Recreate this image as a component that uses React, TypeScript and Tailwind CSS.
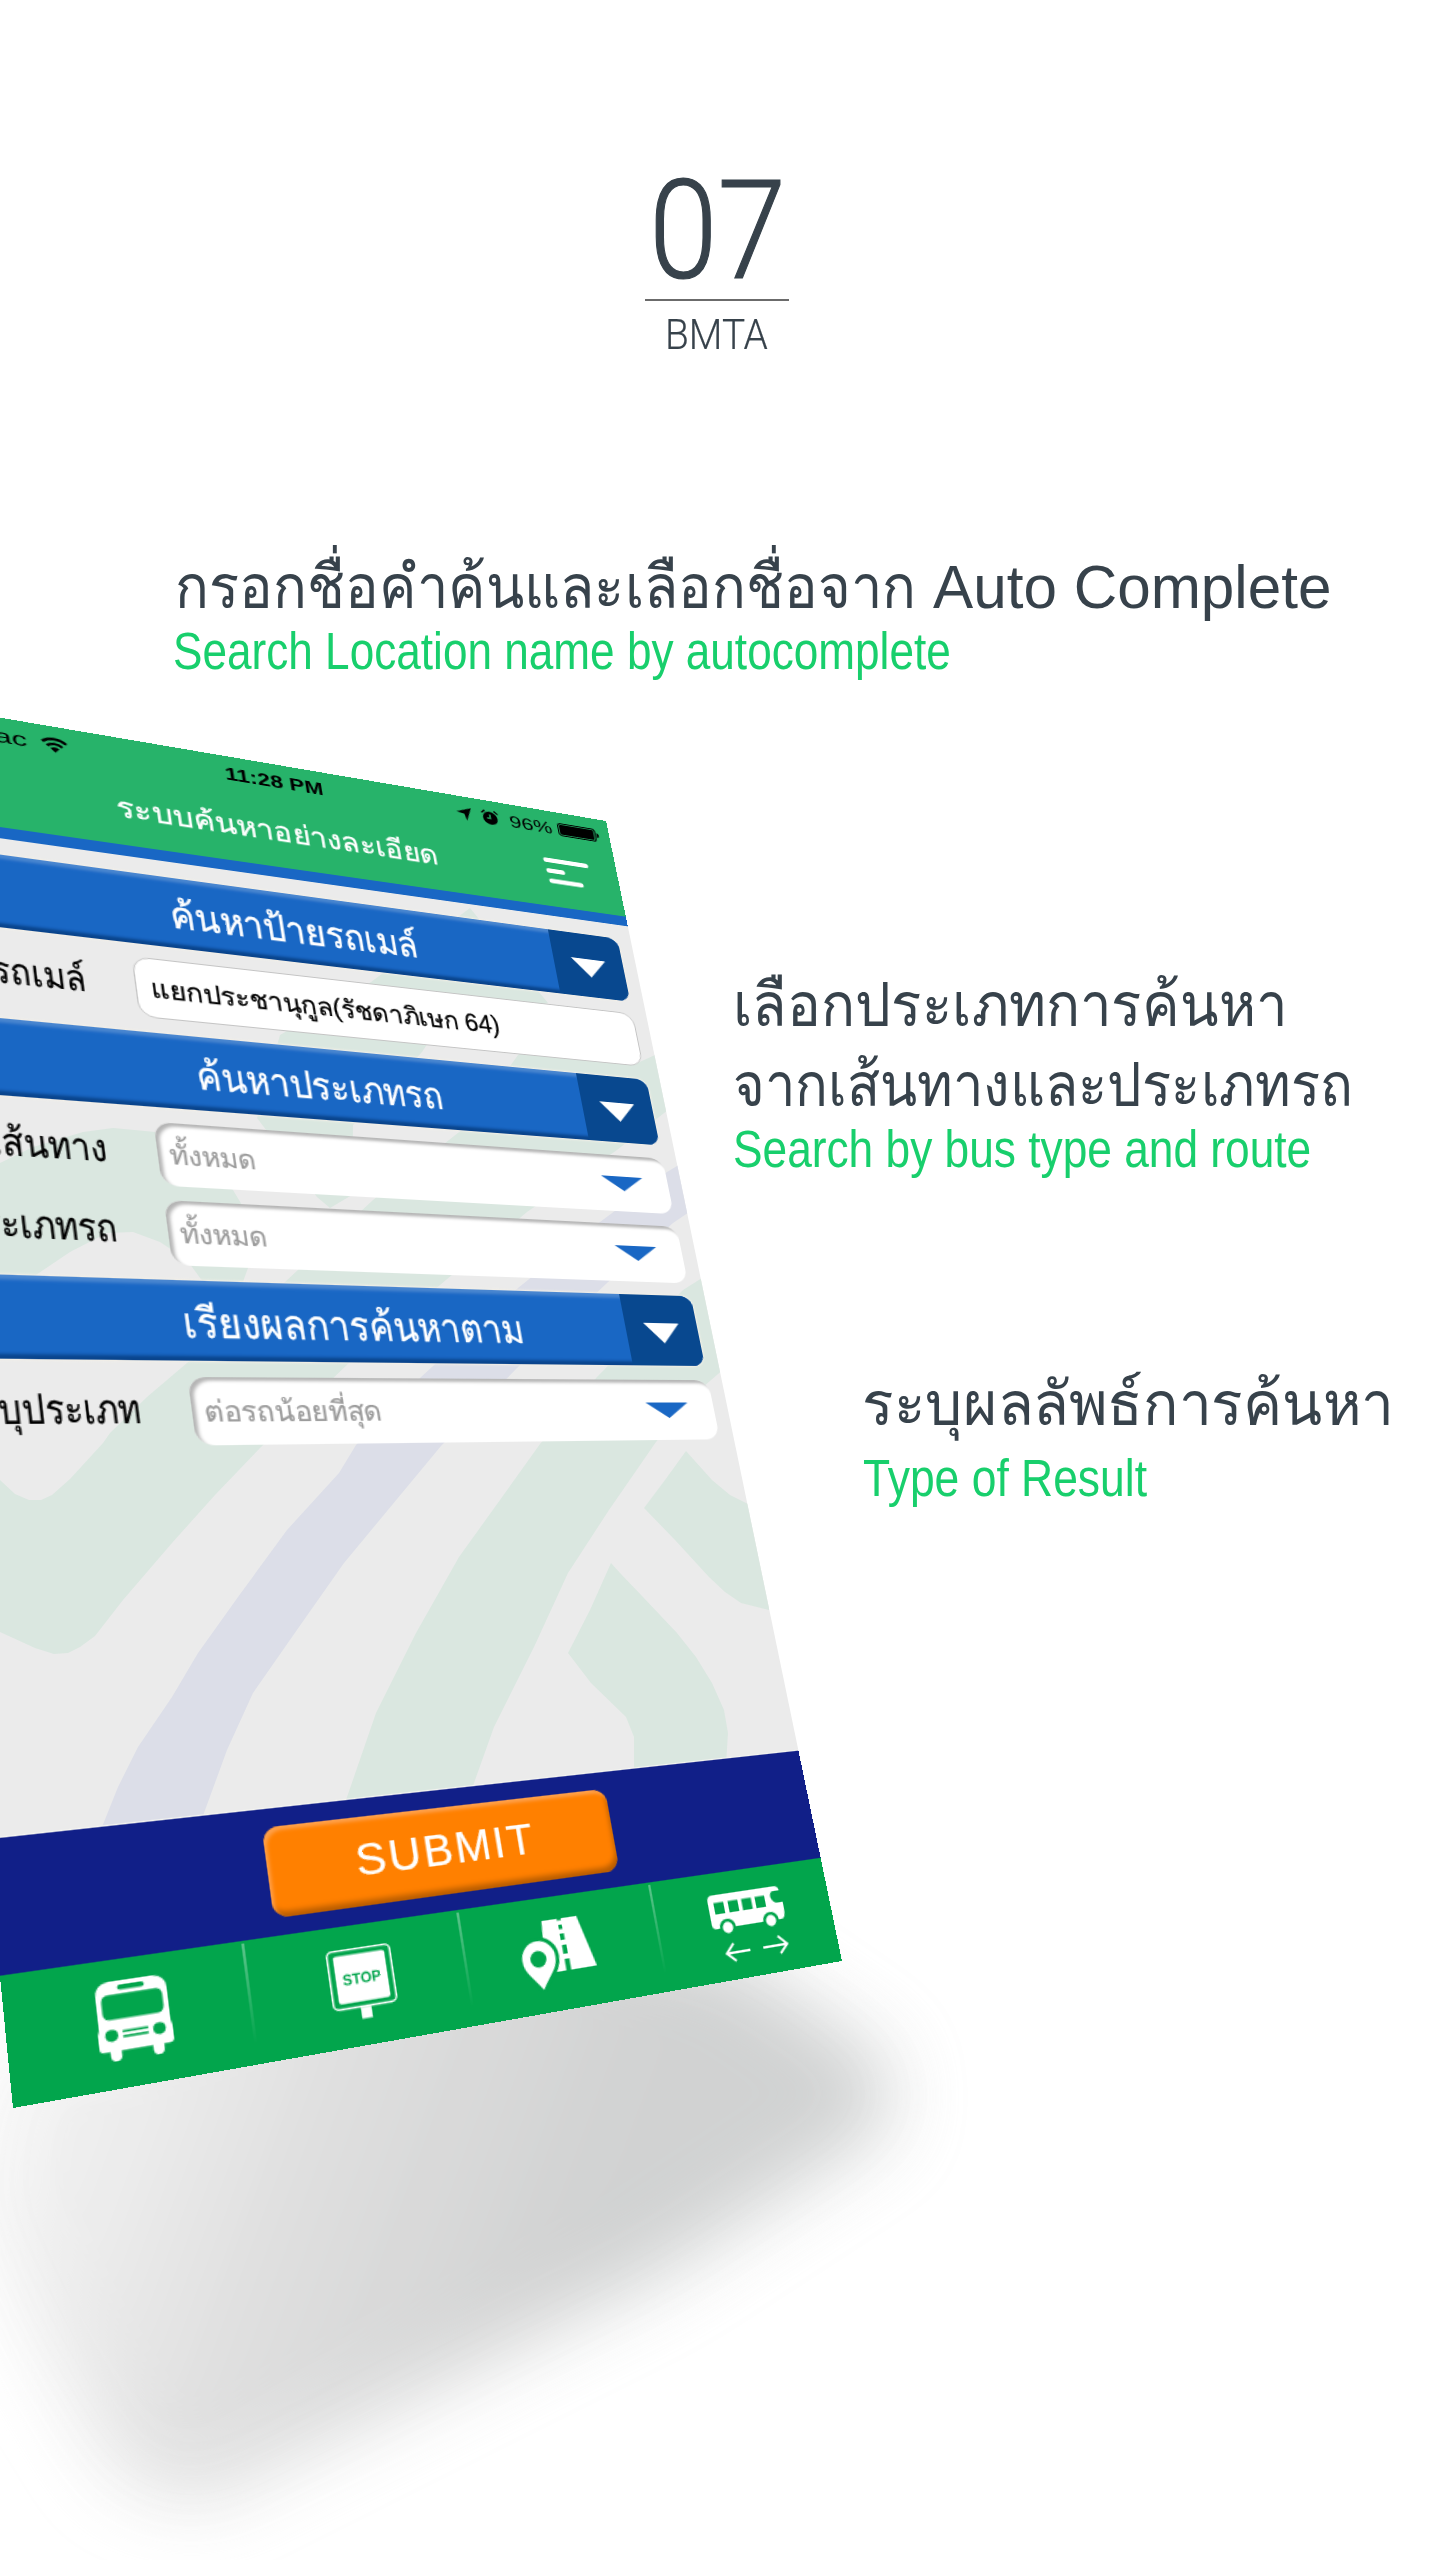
import React, { useLayoutEffect, useRef, useState } from "react";

const PANEL_W = 640;
const PANEL_H = 1136;

// Corners of the tilted phone screen on the page: top-left, top-right, bottom-right, bottom-left.
const CORNERS = [
  [-127, 696],
  [606, 821],
  [842, 1961],
  [13, 2108],
];

function tilt(): string {
  const [[x0, y0], [x1, y1], [x2, y2], [x3, y3]] = CORNERS;
  const dx1 = x1 - x2, dx2 = x3 - x2, dx3 = x0 - x1 + x2 - x3;
  const dy1 = y1 - y2, dy2 = y3 - y2, dy3 = y0 - y1 + y2 - y3;
  const det = dx1 * dy2 - dx2 * dy1;
  const g = (dx3 * dy2 - dx2 * dy3) / det;
  const h = (dx1 * dy3 - dx3 * dy1) / det;
  const a = (x1 - x0 + g * x1) / PANEL_W;
  const d = (y1 - y0 + g * y1) / PANEL_W;
  const b = (x3 - x0 + h * x3) / PANEL_H;
  const e = (y3 - y0 + h * y3) / PANEL_H;
  return `matrix3d(${a},${d},0,${g / PANEL_W},${b},${e},0,${h / PANEL_H},0,0,1,0,${x0},${y0},0,1)`;
}

/** Condenses or widens a line of text so that it fills its box. */
function Fit({ className, children }: { className: string; children: React.ReactNode }) {
  const box = useRef<HTMLDivElement>(null);
  const text = useRef<HTMLDivElement>(null);
  const [scale, setScale] = useState(1);
  useLayoutEffect(() => {
    if (box.current && text.current) setScale(box.current.offsetWidth / text.current.offsetWidth);
  }, []);
  return (
    <div ref={box} className={`shrink-0 whitespace-nowrap ${className}`}>
      <div ref={text} className="w-max origin-left" style={{ transform: `scaleX(${scale})` }}>
        {children}
      </div>
    </div>
  );
}

function Shadow() {
  return (
    <svg className="absolute left-0 top-0" width="1440" height="2560" viewBox="0 0 1440 2560">
      <defs>
        <linearGradient id="shade" gradientUnits="userSpaceOnUse" x1="20" y1="2060" x2="560" y2="2260">
          <stop offset="0" stopColor="#f5f5f5" />
          <stop offset="0.5" stopColor="#dfdfdf" />
          <stop offset="1" stopColor="#cfd0d0" />
        </linearGradient>
        <filter id="soft" filterUnits="userSpaceOnUse" x="-200" y="1700" width="1400" height="1100">
          <feGaussianBlur stdDeviation="38" />
        </filter>
      </defs>
      <polygon
        filter="url(#soft)"
        fill="url(#shade)"
        opacity="0.95"
        points="0,2050 500,1900 740,1960 885,2060 890,2125 660,2275 200,2505 120,2480 40,2350 -30,2200"
      />
    </svg>
  );
}

const GREEN = [
  "0,1163 33,1147 83,1132 113,1128 155,1132 200,1150 233,1190 242,1205 260,1240 248,1268 240,1290 207,1290 203,1282 187,1260 160,1242 133,1232 107,1233 70,1252 33,1277 0,1295",
  "470,908 548,1003 430,1040 422,1052 353,1125 352,1195 330,1208 317,1197 257,1118 280,1035 367,985",
  "633,1065 655,1055 700,1035 700,1085 668,1110 617,1150 527,1212 440,1285 350,1362 261,1447 215,1495 172,1543 123,1600 95,1636 80,1647 68,1653 54,1654 35,1648 0,1632 0,1480 15,1494 29,1500 41,1500 52,1495 70,1479 103,1443 110,1433 147,1397 187,1363 285,1282 373,1200 468,1125 518,1055 560,1035",
  "540,1444 505,1493 459,1557 416,1633 376,1713 346,1800 470,1800 474,1783 494,1727 534,1647 568,1573 609,1510 656,1442 703,1387 740,1355 740,1240 702,1278 683,1290 597,1377",
  "686,1451 665,1480 644,1508 675,1540 709,1577 725,1592 741,1603 769,1610 780,1520 746,1503 730,1495 712,1480",
  "611,1563 590,1610 568,1653 591,1683 626,1717 634,1737 634,1775 726,1765 728,1733 724,1710 712,1683 696,1657 677,1633 643,1597 620,1573",
];
const LAVENDER =
  "710,1143 677,1166 667,1172 600,1222 518,1288 420,1378 356,1445 339,1473 287,1530 238,1597 198,1653 172,1697 138,1747 118,1787 100,1832 200,1832 204,1813 227,1750 253,1693 299,1627 344,1563 402,1493 441,1446 517,1368 607,1283 673,1223 710,1198";

function Backdrop() {
  return (
    <svg className="absolute left-0 top-0" width="1440" height="2560" viewBox="0 0 1440 2560">
      <clipPath id="screen">
        <polygon points={CORNERS.map((p) => p.join(",")).join(" ")} />
      </clipPath>
      <g clipPath="url(#screen)">
        <rect y="690" width="860" height="1430" fill="#ebebeb" />
        {GREEN.map((p) => (
          <polygon key={p} points={p} fill="#dae7e0" />
        ))}
        <polygon points={LAVENDER} fill="#dcdee8" />
      </g>
    </svg>
  );
}

function SectionBar({ children }: { children: React.ReactNode }) {
  return (
    <div className="ml-[15px] mr-[14px] grid h-[70px] grid-cols-[68px_1fr_71px] overflow-hidden rounded-[12px] bg-[#1967c4] shadow-[inset_0_5px_3px_-1px_#4a86d0,inset_0_-5px_3px_-1px_#0a448c,0_0_2px_1px_#f3efe6]">
      <div />
      <div className="flex justify-center pr-[4px] text-[37px] leading-[75px] text-white [-webkit-text-stroke:0.4px_white]">
        {children}
      </div>
      <div className="flex items-center justify-center bg-[#08488f]">
        <svg width="35" height="20" viewBox="0 0 35 20">
          <path d="M0 0H35L17.5 20Z" fill="#fff" />
        </svg>
      </div>
    </div>
  );
}

function Row({ label, children, select }: { label: React.ReactNode; children: React.ReactNode; select?: boolean }) {
  return (
    <div className="flex h-[58px] items-stretch">
      <div className="mr-[38px] flex w-[136px] justify-end text-[34px] leading-[55px] text-black [-webkit-text-stroke:0.2px_black]">
        {label}
      </div>
      {select ? (
        <div className="flex w-[452px] items-center justify-between rounded-[14px] bg-white pl-[9px] pr-[25px] text-[25px] leading-[53px] text-[#9b9b9b] shadow-[inset_3px_3px_3px_0_#b5b5b5] [-webkit-text-stroke:0.2px_#9b9b9b]">
          {children}
          <svg width="41" height="15" viewBox="0 0 41 15">
            <path d="M0 0H41L20.5 15Z" fill="#1967c4" />
          </svg>
        </div>
      ) : (
        <div className="flex w-[452px] items-center rounded-[14px] border border-[#c4c4c4] bg-white pl-[11px] text-[25px] leading-[56px] text-black [-webkit-text-stroke:0.3px_black]">
          {children}
        </div>
      )}
    </div>
  );
}

function StatusBar() {
  return (
    <div className="grid h-[38px] grid-cols-3 text-[19px] leading-[38px] text-black">
      <div className="flex items-center pl-[88px]">
        <Fit className="w-[25px]">ac</Fit>
        <svg className="ml-[11px]" width="21" height="16" viewBox="0 0 21 16" fill="none" stroke="#000" strokeWidth="2.6">
          <path d="M1 5.6C6.500.6 14.500.6 20 5.600" />
          <path d="M4.400 9.200C8 6 13 6 16.600 9.200" />
          <path d="M7 11.600C9 9.900 12 9.900 14 11.600L10.500 15.400Z" fill="#000" stroke="none" />
        </svg>
      </div>
      <div className="flex justify-center pr-[6px] font-bold">
        <Fit className="w-[86px]">11:28 PM</Fit>
      </div>
      <div className="flex items-center justify-end pr-[10px]">
        <svg width="15" height="15" viewBox="0 0 14 14">
          <path d="M14 0L8.500 14L7 7L0 5.500Z" />
        </svg>
        <svg className="ml-[9px]" width="18" height="18" viewBox="0 0 18 18">
          <circle cx="9" cy="9.800" r="7.200" />
          <path d="M1 4.500L4.500 1.300M17 4.500L13.500 1.300" stroke="#000" strokeWidth="1.600" />
          <path d="M9 5.500V10H5.800" stroke="#27b36a" strokeWidth="1.500" fill="none" />
        </svg>
        <Fit className="ml-[10px] w-[43px] leading-[35px]">96%</Fit>
        <svg className="ml-[6px]" width="44" height="15" viewBox="0 0 44 16" preserveAspectRatio="none">
          <rect x="0.600" y="0.600" width="38.500" height="14.800" rx="3" fill="none" stroke="#000" strokeWidth="1.200" />
          <rect x="2" y="2" width="35.500" height="12" rx="1.500" />
          <path d="M40.500 5C43.600 5.500 43.600 10.500 40.500 11Z" />
        </svg>
      </div>
    </div>
  );
}

const TAB = "#02a54c";

function BusFront() {
  return (
    <svg width="49" height="55" viewBox="0 0 50 56" preserveAspectRatio="none" fill="#fff">
      <path d="M10 0H40Q49 1 49 10V33L50 37V46Q50 49 47 49H43V53A3.800 3.800 0 0 1 35.500 53V49H14.500V53A3.800 3.800 0 0 1 7 53V49H3Q0 49 0 46V37L1 33V10Q1 1 10 0Z" />
      <rect x="16" y="3" width="18" height="3.600" rx="1.800" fill={TAB} />
      <rect x="4.500" y="9.500" width="41" height="17.500" rx="4.500" fill={TAB} />
      <circle cx="9" cy="38" r="4.200" fill={TAB} />
      <circle cx="41" cy="38" r="4.200" fill={TAB} />
      <rect x="16.500" y="35.200" width="17" height="1.600" fill={TAB} />
      <rect x="16.500" y="38.800" width="17" height="1.600" fill={TAB} />
    </svg>
  );
}

function StopSign() {
  return (
    <svg width="48" height="53" viewBox="0 0 49 54" preserveAspectRatio="none">
      <rect x="0.700" y="0.700" width="47.600" height="43.600" rx="4" fill="none" stroke="#fff" strokeWidth="1.400" />
      <rect x="5" y="4.500" width="39" height="36" rx="2" fill="#fff" />
      <rect x="20.500" y="45" width="8" height="8.500" fill="#fff" />
      <text x="24.500" y="27" textAnchor="middle" fontFamily="Liberation Sans" fontWeight="bold" fontSize="11.500" textLength="29" lengthAdjust="spacingAndGlyphs" fill={TAB}>
        STOP
      </text>
    </svg>
  );
}

function RoadPin() {
  return (
    <svg width="60" height="55" viewBox="0 0 60 55">
      <path d="M21 0H50L60 41H25V22H19Z" fill="#fff" />
      <path d="M33.500 0H37V1.500H33.500ZM34 5H37V8.500H34ZM34 12H37.500V17H34ZM34.300 21H38V28H34.300ZM34.500 32H38.500V41H34.500Z" fill={TAB} />
      <path d="M14 15A13.500 13.500 0 0 1 27.500 29C27.500 38 21 42 14 53C7 42 0.500 38 0.500 29A13.500 13.500 0 0 1 14 15Z" fill="#fff" stroke={TAB} strokeWidth="6" paintOrder="stroke" />
      <circle cx="13.500" cy="29" r="6.500" fill={TAB} />
    </svg>
  );
}

function BusSide() {
  return (
    <svg width="68" height="57" viewBox="0 0 68 57">
      <path d="M5 0H62Q66 0 66.500 4H60Q57 5 57.500 9Q59 14 63 14H68V19Q68 28 64 28H4Q0 28 0 24V5Q0 0 5 0Z" fill="#fff" />
      <path d="M5 6.500H14V16H5ZM18 6.500H27V16H18ZM30.500 6.500H39.500V16H30.500ZM43 6.500H52V16H43Z" fill={TAB} />
      <circle cx="14" cy="28" r="6" fill="#fff" stroke={TAB} strokeWidth="2.600" />
      <circle cx="54" cy="28" r="6" fill="#fff" stroke={TAB} strokeWidth="2.600" />
      <path d="M30 49H8.500M16 41.500L8.500 49L16 56M42 49H64.500M57 41.500L64.500 49L57 56" stroke="#fff" strokeWidth="2" fill="none" />
    </svg>
  );
}

function Phone() {
  return (
    <div
      className="absolute left-0 top-0 flex h-[1136px] w-[640px] origin-top-left flex-col"
      style={{ transform: tilt() }}
    >
      <div className="h-[110px] bg-[#27b36a]">
        <StatusBar />
        <div className="grid h-[68px] grid-cols-[178px_280px_1fr] text-[28px] leading-[69px] text-white">
          <div />
          <Fit className="w-[280px] [-webkit-text-stroke:0.3px_white]">ระบบค้นหาอย่างละเอียด</Fit>
          <svg className="ml-auto mr-[29px] mt-[16px]" width="47" height="30" viewBox="0 0 47 30" stroke="#fff" strokeWidth="5" strokeLinecap="round">
            <path d="M3 3.500H44M4 15.500H18M5 27H35" />
          </svg>
        </div>
      </div>
      <div className="mb-[16px] h-[11px] bg-[#1967c4]" />
      <SectionBar>
        <Fit className="w-[214px]">ค้นหาป้ายรถเมล์</Fit>
      </SectionBar>
      <div className="mb-[14px] mt-[13px]">
        <Row label={<Fit className="w-[116px]">ป้ายรถเมล์</Fit>}>
          <Fit className="w-[302px]">แยกประชานุกูล(รัชดาภิเษก 64)</Fit>
        </Row>
      </div>
      <SectionBar>
        <Fit className="w-[209px]">ค้นหาประเภทรถ</Fit>
      </SectionBar>
      <div className="mb-[13px] mt-[14px] flex flex-col gap-[13px]">
        <Row select label={<Fit className="w-[86px]">เส้นทาง</Fit>}>
          <Fit className="w-[68px]">ทั้งหมด</Fit>
        </Row>
        <Row select label={<Fit className="w-[114px]">ประเภทรถ</Fit>}>
          <Fit className="w-[68px]">ทั้งหมด</Fit>
        </Row>
      </div>
      <SectionBar>
        <Fit className="w-[282px]">เรียงผลการค้นหาตาม</Fit>
      </SectionBar>
      <div className="mt-[14px] flex-1">
        <Row select label={<Fit className="w-[126px]">ระบุประเภท</Fit>}>
          <Fit className="w-[140px]">ต่อรถน้อยที่สุด</Fit>
        </Row>
      </div>
      <div className="flex h-[96px] items-center justify-center border-t border-[#f4f4f0] bg-[#111f88]">
        <div className="flex h-[68px] w-[273px] justify-center rounded-[12px] bg-[#ff8000] text-[35px] leading-[66px] tracking-[2px] text-white shadow-[inset_2px_3px_3px_0_#ffa04a,inset_-2px_-5px_4px_-1px_#b85c00] [-webkit-text-stroke:0.2px_white]">
          <Fit className="w-[142px]">SUBMIT</Fit>
        </div>
      </div>
      <div className="relative grid h-[89px] grid-cols-4 bg-[#02a54c]">
        <div className="pl-[57px] pt-[15px]"><BusFront /></div>
        <div className="pl-[57px] pt-[17px]"><StopSign /></div>
        <div className="pl-[44px] pt-[18px]"><RoadPin /></div>
        <div className="pl-[48px] pt-[18px]"><BusSide /></div>
        <div className="absolute left-[1px] top-[2px] grid h-[72px] w-[480px] grid-cols-3">
          {[0, 1, 2].map((i) => (
            <div key={i} className="ml-auto w-[2px] bg-gradient-to-b from-white/35 to-transparent" />
          ))}
        </div>
      </div>
    </div>
  );
}

export default function App() {
  return (
    <div className="relative h-[2560px] w-[1440px] overflow-hidden bg-white font-['Liberation_Sans',sans-serif] text-[#37424b]">
      <Shadow />
      <Backdrop />
      <Phone />
      <div className="relative flex flex-col">
        <div className="ml-[645px] flex w-[144px] flex-col items-center pt-[161px] font-['Roboto'] font-light">
          <Fit className="h-[138px] w-[137px] text-[137px] leading-[141px] [-webkit-text-stroke:1.2px_#37424b]">07</Fit>
          <div className="h-[2px] w-full bg-[#6b6b6b]" />
          <Fit className="mr-[2px] mt-[8px] h-[50px] w-[103px] text-[43px] leading-[51px] [-webkit-text-stroke:0.2px_#37424b]">BMTA</Fit>
        </div>

        <div className="ml-[175px] mt-[194px]">
          <div className="flex h-[68px] text-[61px] leading-[68px]">
            <Fit className="w-[741px]">กรอกชื่อคำค้นและเลือกชื่อจาก</Fit>
            <Fit className="ml-[17px] w-[399px]">Auto Complete</Fit>
          </div>
          <Fit className="-ml-[2px] w-[778px] text-[51px] leading-[61px] text-[#18cf6c]">
            Search Location name by autocomplete
          </Fit>
        </div>

        <div className="ml-[733px] mt-[283px] text-[61px] leading-[80px]">
          <Fit className="w-[554px]">เลือกประเภทการค้นหา</Fit>
          <Fit className="w-[620px]">จากเส้นทางและประเภทรถ</Fit>
          <Fit className="-mt-[6px] w-[578px] text-[51px] leading-[61px] text-[#18cf6c]">
            Search by bus type and route
          </Fit>
        </div>

        <div className="ml-[862px] mt-[185px] text-[61px] leading-[79px]">
          <Fit className="w-[532px]">ระบุผลลัพธ์การค้นหา</Fit>
          <Fit className="ml-[1px] mt-[4px] w-[284px] text-[51px] leading-[61px] text-[#18cf6c]">Type of Result</Fit>
        </div>
      </div>
    </div>
  );
}
